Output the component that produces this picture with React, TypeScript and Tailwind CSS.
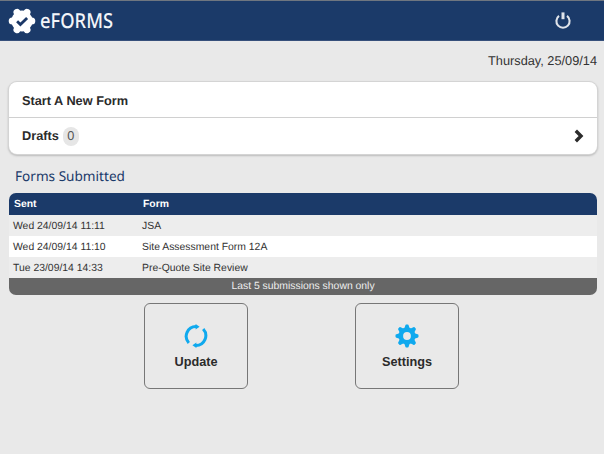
import type { ReactNode } from "react";

const submissions = [
  { sent: "Wed 24/09/14 11:11", form: "JSA" },
  { sent: "Wed 24/09/14 11:10", form: "Site Assessment Form 12A" },
  { sent: "Tue 23/09/14 14:33", form: "Pre-Quote Site Review" },
];

function Logo() {
  return (
    <svg className="h-[26px] w-[28px] shrink-0" viewBox="-14 -13 28 26" aria-hidden="true">
      <circle r="10.6" fill="#fff" />
      <g stroke="#fff" strokeWidth="7" strokeLinecap="round">
        <path d="M-9.8 0H9.8" />
        <path d="M-5 -8.7L5 8.7" />
        <path d="M5 -8.7L-5 8.7" />
      </g>
      <path d="M-4.9 .3L-1.6 3.6L5.1 -3.1" fill="none" stroke="#1b3867" strokeWidth="2.8" />
    </svg>
  );
}

function PowerIcon() {
  return (
    <svg className="h-[18px] w-[16px]" viewBox="0 0 16 18" fill="none" stroke="#dfe3ea" aria-hidden="true">
      <path d="M4 3.9A6.6 6.6 0 1 0 12 3.9" strokeWidth="2.1" />
      <path d="M8 .4V7.2" strokeWidth="3" />
    </svg>
  );
}

function UpdateIcon() {
  return (
    <svg className="size-6" viewBox="-12 -12 24 24" aria-hidden="true">
      <g fill="none" stroke="#0fa9ee" strokeWidth="3">
        <path d="M-7.2 6.9A9.8 9.8 0 0 1 0 -9.5" />
        <path d="M7.2 -6.9A9.8 9.8 0 0 1 0 9.5" />
      </g>
      <path d="M-.4 -12L3.6 -9.3L-.4 -6.4ZM.4 12L-3.6 9.3L.4 6.4Z" fill="#0fa9ee" />
    </svg>
  );
}

function GearIcon() {
  return (
    <svg className="size-6" viewBox="-12 -12 24 24" aria-hidden="true">
      <circle r="6.2" fill="none" stroke="#0fa9ee" strokeWidth="4.6" />
      {[0, 45, 90, 135, 180, 225, 270, 315].map((angle) => (
        <path
          key={angle}
          d="M-2.7 -7.4L-1.7 -10.6Q-1.5 -11.5 -.8 -11.5H.8Q1.5 -11.5 1.7 -10.6L2.7 -7.4Z"
          fill="#0fa9ee"
          transform={`rotate(${angle})`}
        />
      ))}
    </svg>
  );
}

function Tile({ label, children }: { label: string; children: ReactNode }) {
  return (
    <button className="flex h-[86px] w-[104px] flex-col items-center rounded-[6px] border border-[#777] pt-[20px]">
      {children}
      <span className="mt-[6px] text-[12.7px] leading-4 font-bold text-[#2b2b2b]">{label}</span>
    </button>
  );
}

export default function App() {
  return (
    <div className="h-[454px] w-[604px] overflow-hidden bg-[#e9e9e9] font-['Liberation_Sans',Arial,sans-serif] text-[#333] [text-rendering:geometricPrecision]">
      <header className="flex h-[41px] items-center justify-between border-t border-b border-t-[#6f7680] border-b-[#36507b] bg-[#1b3a69] pr-[33px] pl-[8px]">
        <div className="flex items-center gap-[4px]">
          <Logo />
          <span className="inline-block origin-left scale-x-[0.89] font-['Noto_Sans',sans-serif] text-[20.6px] leading-6 font-medium text-[#f3f5f9]">
            eFORMS
          </span>
        </div>
        <PowerIcon />
      </header>

      <main className="pr-[7px] pl-[9px]">
        <div className="h-[41px] pt-[12px] text-right text-[12.75px] leading-4">Thursday, 25/09/14</div>

        <nav className="h-[72px] rounded-[8px] bg-white text-[12.75px] font-bold text-[#2b2b2b] shadow-[0_0_0_1px_#d4d4d4,0_1px_2px_1px_#bbb]">
          <div className="flex h-[36px] items-center border-b border-[#d0d0d0] pt-[2px] pl-[13px]">Start A New Form</div>
          <div className="flex h-[36px] items-center pr-[13px] pl-[13px]">
            <span>Drafts</span>
            <span className="ml-[4px] flex h-[19px] w-[16px] items-center justify-center rounded-full bg-[#e6e6e6] font-normal text-[#555]">
              0
            </span>
            <svg className="ml-auto h-[14px] w-[10px]" viewBox="0 0 10 14" aria-hidden="true">
              <path d="M1.8 1.8L7 7L1.8 12.2" fill="none" stroke="#2b2b2b" strokeWidth="3.4" />
            </svg>
          </div>
        </nav>

        <h2 className="h-[39px] pt-[11px] pl-[6px] font-['Noto_Sans',sans-serif] text-[13.6px] leading-[21px] text-[#1b3a69]">
          Forms Submitted
        </h2>

        <section className="overflow-hidden rounded-[7px] text-[10.4px]">
          <div className="grid h-[22px] grid-cols-[129px_1fr] items-center bg-[#1b3a69] pt-[1px] pl-[5px] font-bold text-white">
            <span>Sent</span>
            <span>Form</span>
          </div>
          {submissions.map((row) => (
            <div
              key={row.sent}
              className="grid h-[21px] grid-cols-[129px_1fr] items-center bg-[#ededed] pt-[2px] pl-[4px] nth-3:bg-white"
            >
              <span>{row.sent}</span>
              <span>{row.form}</span>
            </div>
          ))}
          <div className="flex h-[17px] items-center justify-center bg-[#666] pt-[1px] text-[#eee]">
            Last 5 submissions shown only
          </div>
        </section>

        <div className="mt-[8px] ml-[135px] flex gap-[107px]">
          <Tile label="Update">
            <UpdateIcon />
          </Tile>
          <Tile label="Settings">
            <GearIcon />
          </Tile>
        </div>
      </main>
    </div>
  );
}
